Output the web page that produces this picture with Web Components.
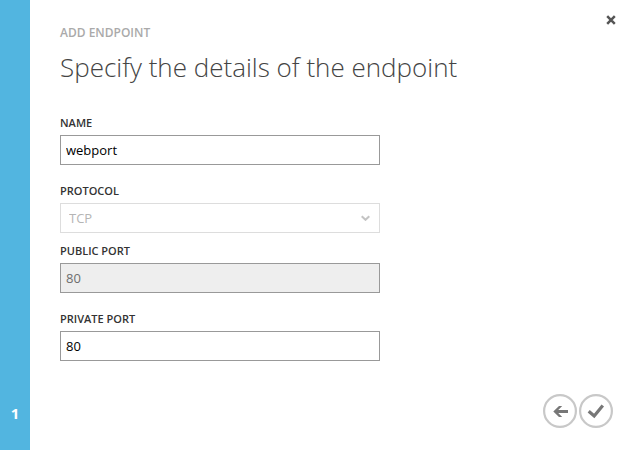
<!DOCTYPE html>
<html lang="en">
<head>
<meta charset="utf-8">
<title>Add endpoint</title>
<style>
  html, body { margin: 0; min-height: 100%; background: #fff; }
  body { font-family: "Open Sans", "Noto Sans", sans-serif; color: #333; }
</style>
</head>
<body>
<wizard-dialog>
  <step-rail slot="rail" step="1"></step-rail>
  <wizard-heading slot="heading">
    <span slot="eyebrow">ADD ENDPOINT</span>
    Specify the details of the endpoint
  </wizard-heading>
  <text-field label="NAME" value="webport"></text-field>
  <select-field label="PROTOCOL" value="TCP"></select-field>
  <text-field label="PUBLIC PORT" value="80" disabled></text-field>
  <text-field label="PRIVATE PORT" value="80"></text-field>
  <icon-button slot="close" kind="close" label="Close"></icon-button>
  <icon-button slot="actions" kind="back" label="Back"></icon-button>
  <icon-button slot="actions" kind="done" label="Complete"></icon-button>
</wizard-dialog>

<script>
const mount = (host, html) => {
  const t = document.createElement('template');
  t.innerHTML = html;
  host.attachShadow({ mode: 'open' }).append(t.content.cloneNode(true));
  return host.shadowRoot;
};

class WizardDialog extends HTMLElement {
  connectedCallback() {
    if (this.shadowRoot) return;
    mount(this, `
      <style>
        :host { display: grid; grid-template-columns: 30px minmax(0, 1fr) auto; min-height: 100vh; }
        main { padding: 24px 0 20px 30px; }
        form { display: flex; flex-direction: column; max-width: 320px; margin-top: 28px; }
        aside { display: flex; flex-direction: column; justify-content: space-between; align-items: flex-end; margin-left: -160px; pointer-events: none; }
        .close { padding: 13px 12px 0 0; }
        .actions { display: flex; gap: 2px; padding: 0 17px 22px 0; }
        ::slotted(icon-button) { pointer-events: auto; }
      </style>
      <slot name="rail"></slot>
      <main>
        <slot name="heading"></slot>
        <form><slot></slot></form>
      </main>
      <aside>
        <div class="close"><slot name="close"></slot></div>
        <div class="actions"><slot name="actions"></slot></div>
      </aside>`);
  }
}

class StepRail extends HTMLElement {
  connectedCallback() {
    if (this.shadowRoot) return;
    const root = mount(this, `
      <style>
        :host { display: flex; align-items: flex-end; justify-content: center; background: #52b5e0; }
        span { color: #fff; font-size: 15px; font-weight: 700; line-height: 20px; padding-bottom: 27px; }
      </style>
      <span></span>`);
    root.querySelector('span').textContent = this.getAttribute('step');
  }
}

class WizardHeading extends HTMLElement {
  connectedCallback() {
    if (this.shadowRoot) return;
    mount(this, `
      <style>
        :host { display: block; }
        p { margin: 0; color: #aaa; font-size: 12px; font-weight: 600; line-height: 18px; }
        h1 { margin: 5px 0 0; color: #444; font-size: 26px; font-weight: 300; line-height: 40px; }
      </style>
      <p><slot name="eyebrow"></slot></p>
      <h1><slot></slot></h1>`);
  }
}

const fieldStyle = `
  :host { display: flex; flex-direction: column; gap: 4px; margin-bottom: 18px; }
  label { font-size: 11px; font-weight: 600; line-height: 16px; }
  input, select {
    box-sizing: border-box; width: 100%; height: 30px; margin: 0;
    border: 1px solid #999; border-radius: 0; background: #fff; color: #000;
    font: 13px/20px "Open Sans", "Noto Sans", sans-serif; opacity: 1;
  }`;

class TextField extends HTMLElement {
  connectedCallback() {
    if (this.shadowRoot) return;
    const root = mount(this, `
      <style>${fieldStyle}
        input { padding: 0 5px; }
        input:disabled { background: #eee; color: #6d6d6d; }
      </style>
      <label for="field"></label>
      <input id="field" type="text">`);
    root.querySelector('label').textContent = this.getAttribute('label');
    const input = root.querySelector('input');
    input.value = this.getAttribute('value');
    input.disabled = this.hasAttribute('disabled');
  }
}

class SelectField extends HTMLElement {
  connectedCallback() {
    if (this.shadowRoot) return;
    const root = mount(this, `
      <style>${fieldStyle}
        :host { margin-bottom: 10px; }
        .box { display: grid; align-items: center; }
        .box > * { grid-area: 1 / 1; }
        select { appearance: none; padding: 0 28px 0 8px; border-color: #ddd; color: #b5b5b5; }
        svg { justify-self: end; margin-right: 10px; pointer-events: none; }
      </style>
      <label for="field"></label>
      <div class="box">
        <select id="field" disabled><option></option></select>
        <svg width="9" height="6" viewBox="0 0 9 6" fill="none" stroke="#c4c4c4" stroke-width="2"><path d="M.7 1.2 4.5 4.8 8.3 1.2"/></svg>
      </div>`);
    root.querySelector('label').textContent = this.getAttribute('label');
    root.querySelector('option').textContent = this.getAttribute('value');
  }
}

const icons = {
  close: `<svg width="14" height="14" viewBox="0 0 14 14" fill="none" stroke="#555" stroke-width="2.5"><path d="M3.2 3.2 10.8 10.8M10.8 3.2 3.2 10.8"/></svg>`,
  back: `<svg width="34" height="34" viewBox="0 0 34 34" fill="none"><circle cx="17" cy="17" r="15.9" stroke="#c8c8c8" stroke-width="2.2"/><path d="M12.5 17.5H25" stroke="#777" stroke-width="3"/><path d="M10.3 17.5 16 12H19.2L13.8 17.5 19.2 23H16Z" fill="#777"/></svg>`,
  done: `<svg width="34" height="34" viewBox="0 0 34 34" fill="none"><circle cx="17" cy="17" r="15.9" stroke="#c8c8c8" stroke-width="2.2"/><path d="M9.7 17.2 15.2 22 23.8 11.6" stroke="#777" stroke-width="3.2"/></svg>`
};

class IconButton extends HTMLElement {
  connectedCallback() {
    if (this.shadowRoot) return;
    const root = mount(this, `
      <style>
        :host { display: block; }
        button { display: block; margin: 0; padding: 0; border: 0; border-radius: 50%; background: none; cursor: pointer; }
        svg { display: block; }
      </style>
      <button type="button">${icons[this.getAttribute('kind')]}</button>`);
    root.querySelector('button').setAttribute('aria-label', this.getAttribute('label'));
  }
}

customElements.define('wizard-dialog', WizardDialog);
customElements.define('step-rail', StepRail);
customElements.define('wizard-heading', WizardHeading);
customElements.define('text-field', TextField);
customElements.define('select-field', SelectField);
customElements.define('icon-button', IconButton);
</script>
</body>
</html>
